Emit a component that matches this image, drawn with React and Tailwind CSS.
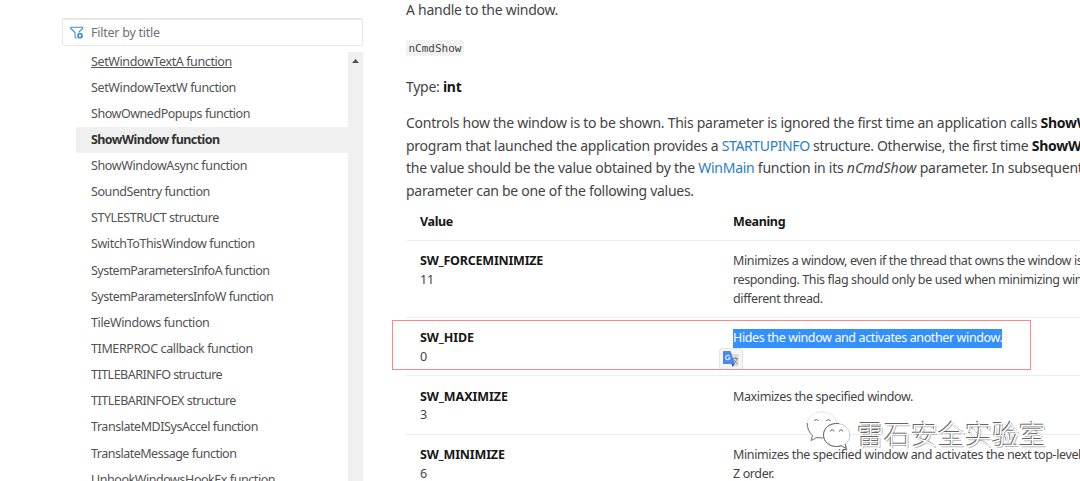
const items = [
  { label: "SetWindowTextA function", look: "tracking-[-0.390px] underline" },
  { label: "SetWindowTextW function", look: "tracking-[-0.370px]" },
  { label: "ShowOwnedPopups function", look: "tracking-[-0.460px]" },
  { label: "ShowWindow function", look: "tracking-[-0.570px] font-bold", current: true },
  { label: "ShowWindowAsync function", look: "tracking-[-0.380px]" },
  { label: "SoundSentry function", look: "tracking-[-0.420px]" },
  { label: "STYLESTRUCT structure", look: "tracking-[-0.430px]" },
  { label: "SwitchToThisWindow function", look: "tracking-[-0.420px]" },
  { label: "SystemParametersInfoA function", look: "tracking-[-0.530px]" },
  { label: "SystemParametersInfoW function", look: "tracking-[-0.520px]" },
  { label: "TileWindows function", look: "tracking-[-0.370px]" },
  { label: "TIMERPROC callback function", look: "tracking-[-0.390px]" },
  { label: "TITLEBARINFO structure", look: "tracking-[-0.510px]" },
  { label: "TITLEBARINFOEX structure", look: "tracking-[-0.490px]" },
  { label: "TranslateMDISysAccel function", look: "tracking-[-0.450px]" },
  { label: "TranslateMessage function", look: "tracking-[-0.500px]" },
  { label: "UnhookWindowsHookEx function", look: "tracking-[-0.440px]" },
];

function FilterIcon() {
  return (
    <svg className="h-[14px] w-[14px] shrink-0" viewBox="0 0 14 14" fill="none" stroke="#3f8fd0" strokeWidth="1.100">
      <path d="M6.500 12.200 L5 11 V6.500 L0.800 2.400 V1.200 H12.600 V2.400 L8.600 6.400" />
      <circle cx="10" cy="9.700" r="2" strokeWidth="1.700" />
    </svg>
  );
}

function TranslateBadge() {
  return (
    <div className="absolute left-[-14px] top-[18.500px] flex h-[22px] w-[24px] items-center justify-center rounded-[3px] border border-[#e4e4e4] bg-[#f5f5f5]">
      <svg className="h-[18px] w-[18px]" viewBox="0 0 18 18">
        <path d="M7 4h9.500v12.500H11z" fill="#dcdcdc" />
        <path d="M10.500 8.500h5.500M13.300 7.200v1.300M15 8.500c-.5 2.500-2 4-4 5M11.700 9.500c.8 2 2.300 3.400 4 4" fill="none" stroke="#7d8b90" strokeWidth="1" />
        <path d="M9 13h4l-2.300 4z" fill="#3548b8" />
        <path d="M1.800 1h6.700l4.500 13H1.800a.8.8 0 0 1-.8-.8V1.800a.8.8 0 0 1 .8-.8z" fill="#4a87ee" />
        <path d="M7.700 6.300A2.200 2.200 0 1 0 8 8H6" fill="none" stroke="#e9f1ff" strokeWidth="1.100" />
      </svg>
    </div>
  );
}

function Watermark() {
  return (
    <div className="absolute left-[806px] top-[411px] flex items-start">
      <svg className="h-[40px] w-[46px] shrink-0" viewBox="0 0 46 40">
        <path d="M16 1C7.500 1 1 6.800 1 14c0 4.200 2.200 7.800 5.600 10.200L5 29.500l6-3c2 .6 4.500.8 6.500.5C22 31 31 30 31 14 31 6.800 24.500 1 16 1z" fill="#fff" stroke="#ccc" strokeWidth=".8" strokeDasharray="1.500 1" />
        <path d="M1.200 12c0 5.200 2 9.800 5.400 12.200L5 29.500l6-3 6 .5" fill="none" stroke="#777" strokeWidth="1" />
        <path d="M30.500 12.500C23 12.500 17.500 17.500 17.500 24S23 35.500 30.500 35.500c1.800 0 3.300-.3 4.800-.8l5.200 3-1.400-4.700c3-2.200 4.700-5.200 4.700-9 0-6.500-5.800-11.500-13.300-11.500z" fill="#fff" stroke="#bbb" strokeWidth=".8" />
        <path d="M33 12.600C23 11.500 17.500 17.500 17.500 24S23 35.500 30.500 35.500c1.800 0 3.300-.3 4.800-.8l5.200 3-1.400-4.700" fill="none" stroke="#666" strokeWidth="1" />
        <path d="M8.500 10a2 2 0 0 1 3.800 0M20.500 10a2 2 0 0 1 3.800 0M24.500 20.500a1.700 1.700 0 0 1 3.400 0M33.500 20.500a1.700 1.700 0 0 1 3.400 0" fill="none" stroke="#666" strokeWidth="1" />
      </svg>
      <span className="ml-[5px] mt-[4px] whitespace-nowrap font-['Noto_Sans_CJK_SC',sans-serif] text-[27px] font-light leading-[38px] text-white [text-shadow:-1px_-1px_0_#666,1px_1px_0_#bbb]">
        雷石安全实验室
      </span>
    </div>
  );
}

function Row({ name, value, look, children }) {
  return (
    <div className="flex border-b border-[#ededed] pb-[8.700px] pt-[11.100px]">
      <div className="w-[327px] shrink-0 pl-[14px]">
        <div className="font-bold text-[#171717]"><span className={look}>{name}</span></div>
        <div>{value}</div>
      </div>
      <div className="relative tracking-[-0.380px]">{children}</div>
    </div>
  );
}

export default function App() {
  return (
    <div className="relative flex h-[481px] w-[1080px] overflow-hidden whitespace-nowrap bg-white font-['Noto_Sans','Open_Sans',sans-serif] text-[#444]">
      <aside className="ml-[62px] w-[301px] shrink-0 pt-[18px]">
        <div className="flex h-[28px] items-center gap-[7px] rounded-[2px] border border-t-2 border-[#e8e8e8] pl-[7px] text-[12.500px] tracking-[-0.240px] text-[#707070]">
          <FilterIcon />
          <span className="pt-[1px]">Filter by title</span>
        </div>
        <div className="mt-[6px] flex h-[429px] overflow-hidden">
          <ul className="-mt-[3.500px] flex-1 pl-[14px] text-[12.500px] text-[#525252]">
            {items.map(({ label, look, current }) => (
              <li key={label} className={current ? "h-[26.150px] bg-[#f0f0f0] pl-[15px] leading-[26.500px] text-[#333]" : "h-[26.150px] pl-[15px] leading-[26.500px]"}>
                <span className={look}>{label}</span>
              </li>
            ))}
          </ul>
          <div className="flex w-[15px] justify-center bg-[#f0f0f0] pt-[7px]">
            <svg className="h-[4px] w-[7px]" viewBox="0 0 7 4"><path d="M0 4L3.500 0L7 4z" fill="#505050" /></svg>
          </div>
        </div>
      </aside>
      <main className="ml-[43px] w-[674px] shrink-0 text-[14px] tracking-[-0.265px]">
        <p className="h-[22px] leading-[20px]">A handle to the window.</p>
        <div className="mt-[18px] flex">
          <code className="h-[16px] rounded-[2px] bg-[#f2f2f2] px-[2.500px] font-['DejaVu_Sans_Mono',monospace] text-[11px] leading-[17px] tracking-[0px]">nCmdShow</code>
        </div>
        <p className="mt-[20px] leading-[22px]">Type: <b className="text-[#171717]">int</b></p>
        <div className="mt-[14px] leading-[22.600px]">
          <p>Controls how the window is to be shown. This parameter is ignored the first time an application calls <b className="text-[#171717]">ShowW</b></p>
          <p>program that launched the application provides a <span className="tracking-[-0.380px] text-[#2a7dc9]">STARTUPINFO</span><span className="tracking-[-0.320px]"> structure. Otherwise, the first time </span><b className="text-[#171717]">ShowW</b></p>
          <p><span className="tracking-[-0.240px]">the value should be the value obtained by the </span><span className="text-[#2a7dc9]">WinMain</span> function in its <i className="tracking-[0px]">nCmdShow</i> parameter. In subsequent</p>
          <p className="tracking-[-0.290px]">parameter can be one of the following values.</p>
        </div>
        <div className="mt-[10.500px] text-[12.500px] leading-[18.800px]">
          <div className="flex border-b border-[#ededed] pb-[8.200px] font-bold tracking-[-0.350px] text-[#171717]">
            <div className="w-[327px] pl-[14px]">Value</div>
            <div>Meaning</div>
          </div>
          <Row name="SW_FORCEMINIMIZE" value="11" look="tracking-[-0.220px]">
            <p>Minimizes a window, even if the thread that owns the window is</p>
            <p>responding. This flag should only be used when minimizing win</p>
            <p>different thread.</p>
          </Row>
          <Row name="SW_HIDE" value="0" look="tracking-[-0.120px]">
            <p className="bg-[#3390ff] text-white">Hides the window and activates another window.</p>
            <TranslateBadge />
          </Row>
          <Row name="SW_MAXIMIZE" value="3" look="tracking-[-0.080px]">
            <p>Maximizes the specified window.</p>
          </Row>
          <Row name="SW_MINIMIZE" value="6" look="tracking-[-0.180px]">
            <p>Minimizes the specified window and activates the next top-level</p>
            <p>Z order.</p>
          </Row>
        </div>
      </main>
      <div className="absolute left-[392px] top-[320px] h-[50px] w-[639px] border border-[#f58a8a]" />
      <Watermark />
    </div>
  );
}
